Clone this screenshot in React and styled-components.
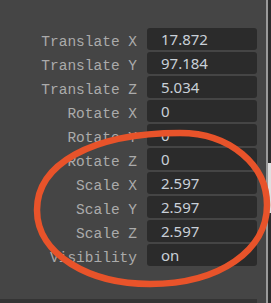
import React from "react";
import styled, { createGlobalStyle } from "styled-components";

const GlobalStyle = createGlobalStyle`
  html, body {
    margin: 0;
    padding: 0;
    background: #454545;
  }
  body {
    width: 271px;
    height: 303px;
    overflow: hidden;
  }
`;

const Page = styled.div`
  position: relative;
  display: flex;
  width: 271px;
  height: 303px;
  background: #454545;
`;

const Panel = styled.div`
  width: 266px;
  display: flex;
  flex-direction: column;
  padding-top: 28px;
  box-sizing: border-box;
`;

const List = styled.div`
  display: grid;
  grid-template-columns: 137px 110px;
  column-gap: 10px;
  row-gap: 2px;
`;

const Label = styled.div`
  font-family: "Liberation Mono", "DejaVu Sans Mono", monospace;
  font-size: 14.5px;
  color: #ababab;
  text-align: right;
  white-space: nowrap;
  line-height: 22px;
  padding-top: 3px;
  height: 22px;
  box-sizing: border-box;
`;

const Field = styled.div`
  height: 22px;
  background: #2b2b2b;
  border-radius: 3px;
  padding-left: 14px;
  font-family: "Noto Sans", "Open Sans", sans-serif;
  font-size: 15px;
  line-height: 22px;
  color: #c9d0d8;
`;

const Footer = styled.div`
  margin-top: auto;
  width: 257px;
  height: 4px;
  background: #343434;
`;

const Scrollbar = styled.div`
  width: 5px;
  border-left: 2px solid #9a9a9a;
  background: #2c2c2c;
  box-sizing: border-box;
  display: flex;
  flex-direction: column;
`;

const Thumb = styled.div`
  margin-top: 163px;
  height: 50px;
  background: #e0e0e0;
`;

const Annotation = styled.svg`
  position: absolute;
  left: 0;
  top: 0;
  pointer-events: none;
`;

const rows = [
  ["Translate X", "17.872"],
  ["Translate Y", "97.184"],
  ["Translate Z", "5.034"],
  ["Rotate X", "0"],
  ["Rotate Y", "0"],
  ["Rotate Z", "0"],
  ["Scale X", "2.597"],
  ["Scale Y", "2.597"],
  ["Scale Z", "2.597"],
  ["Visibility", "on"],
];

export default function App() {
  return (
    <>
      <GlobalStyle />
      <Page>
        <Panel>
          <List>
            {rows.map(([label, value]) => (
              <React.Fragment key={label}>
                <Label>{label}</Label>
                <Field>{value}</Field>
              </React.Fragment>
            ))}
          </List>
          <Footer />
        </Panel>
        <Scrollbar>
          <Thumb />
        </Scrollbar>
        <Annotation width="271" height="303" viewBox="0 0 271 303">
          <path
            d="M 180 133 C 230 133, 267 165, 267 205 C 267 250, 220 284, 150 284 C 90 284, 37 255, 37 210 C 37 165, 90 133, 180 133 Z"
            fill="none"
            stroke="#e8532a"
            strokeWidth="6.5"
          />
        </Annotation>
      </Page>
    </>
  );
}
